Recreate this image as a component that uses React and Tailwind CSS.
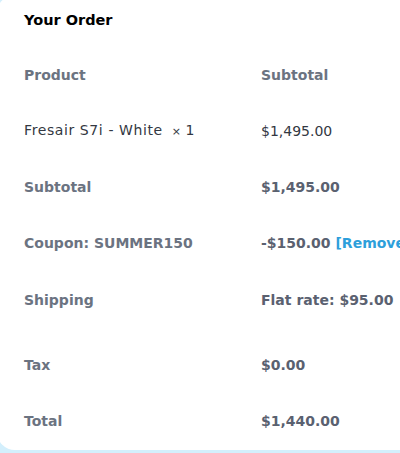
export default function App() {
  const font = { fontFamily: '"DejaVu Sans", sans-serif' };
  const Row = ({ left, right, h = "h-[56px]", leftCls = "font-bold text-[#6b7381]", rightCls = "font-bold text-[#5a6170]" }) => (
    <div className={`flex ${h} items-center`}>
      <div className={`w-[261px] shrink-0 pl-[24px] ${leftCls}`}>{left}</div>
      <div className={`whitespace-nowrap ${rightCls}`}>{right}</div>
    </div>
  );
  return (
    <div className="w-[400px] h-[453px] overflow-hidden bg-[#d3effc]" style={font}>
      <div className="-ml-[3px] -mt-[5px] w-[460px] h-[455px] bg-white rounded-tl-[18px] rounded-bl-[18px] pl-[3px] pt-[6px] text-[14px] leading-[20px]">
        <div className="h-[46px] flex items-center pl-[24px] pb-[8px] font-bold text-black text-[14.5px]">Your Order</div>
        <Row left="Product" right="Subtotal" rightCls="font-bold text-[#6b7381]" />
        <Row
          left={<span className="font-normal text-[#333842]"><span className="tracking-[0.6px]">Fresair S7i - White</span>&nbsp;&nbsp;<span className="text-[11px]">×</span>&nbsp;1</span>}
          leftCls="font-normal"
          right="$1,495.00"
          rightCls="font-normal text-[#333842]"
        />
        <Row left="Subtotal" right="$1,495.00" />
        <Row
          left="Coupon: SUMMER150"
          right={<span>-$150.00 <span className="text-[#2d9fdb]">[Remove]</span></span>}
        />
        <div className="flex h-[66px] items-start pt-[19px]">
          <div className="w-[261px] shrink-0 pl-[24px] font-bold text-[#6b7381]">Shipping</div>
          <div className="whitespace-nowrap font-bold text-[#5a6170]">Flat rate: $95.00</div>
        </div>
        <Row left="Tax" right="$0.00" />
        <Row left="Total" right="$1,440.00" />
      </div>
    </div>
  );
}
